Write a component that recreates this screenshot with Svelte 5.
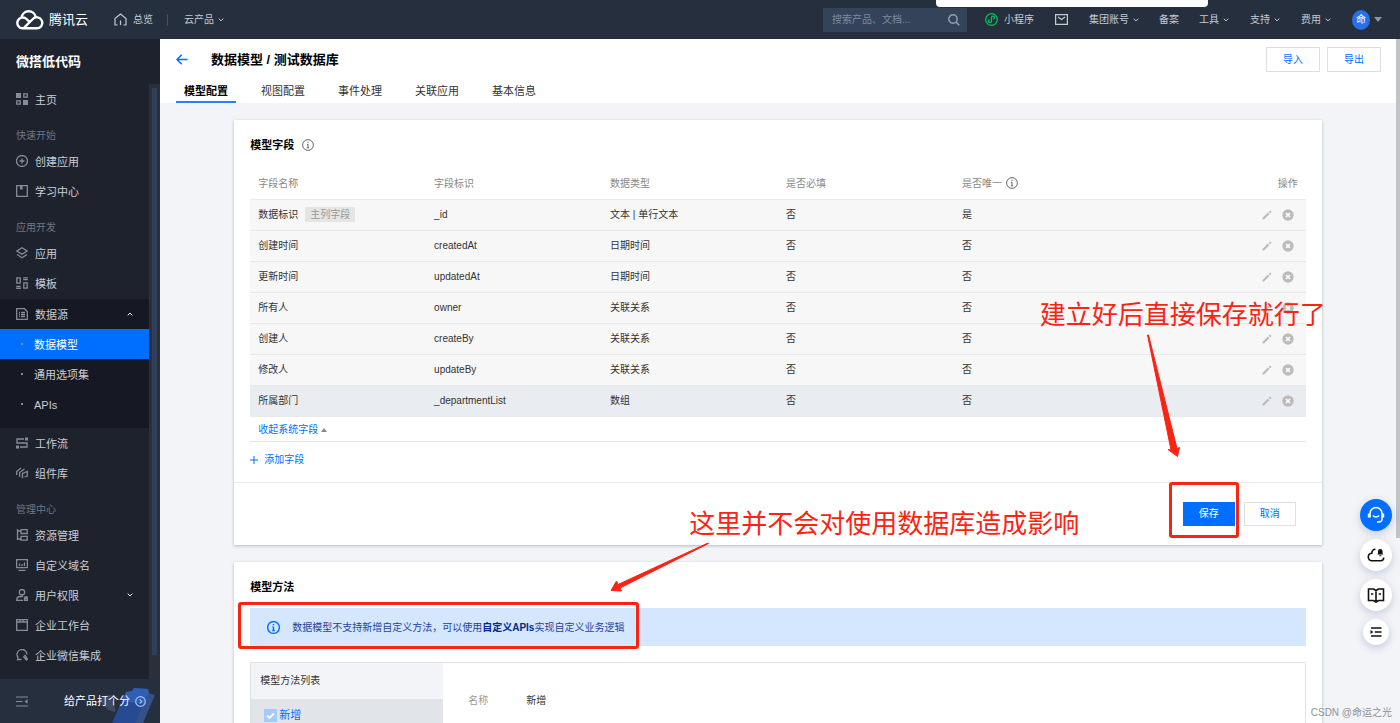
<script>
  const icons = {
    home: '<path d="M0 0h5v5H0zM7 7h5v5H7z" fill="currentColor" stroke="none"/><path d="M7.800.800h3.400v3.400H7.800zM.8 7.800h3.400v3.400H.8z"/>',
    create: '<circle cx="6" cy="6" r="5.5"/><path d="M6 3.5v5M3.5 6h5"/>',
    learn: '<path d="M.7.7h10.6v10.6H.7z"/><path d="M4 1v4l1.3-1L6.600 5V1z" fill="currentColor" stroke="none"/>',
    app: '<path d="M6 .8l5 3.200-5 3.200L1 4z"/><path d="M1 7.500l5 3.300 5-3.300"/>',
    template: '<path d="M.8.8h3.400v5.400H.8zM7.800 5.800h3.400v5.400H7.800z"/><path d="M.2 9.500h4.600M.2 11.300h4.600M7.200.8h4.600M7.200 2.700h4.600"/>',
    data: '<path d="M.7.7h7.800l2.800 2.800v7.800H.7z"/><path d="M3 4.500h1M5 4.500h4M3 6.500h1M5 6.500h4M3 8.500h1M5 8.500h4"/>',
    flow: '<path d="M8 2H1v4h10v4H4"/><path d="M9 .5h3v3H9zM0 8.500h3v3H0z" fill="currentColor" stroke="none"/>',
    parts: '<path d="M.7 8V4.500L5 1M3.700 10V5.500L8.500 2M6.500 11.300V6.500l4.800-2v4.600L8.500 10"/>',
    resource: '<path d="M1.500 0v11M1.500 2H5M1.500 10H5M5 .7h6.200v3.800H5zM5 7.300h6.200v3.900H5z"/>',
    domain: '<path d="M.6.7h10.800v8H.6zM2.500 11.400h7"/><path d="M3.500 7V4.500M6 7V5M8.500 7V3.500"/>',
    user: '<circle cx="6" cy="3.300" r="2.700"/><path d="M7 7.500H4.500C2 7.500.7 9 .7 11.300H7M8.500 9.500h3v2h-3zM9 9.500V8h2v1.500"/>',
    desk: '<path d="M.7.7h10.600v10.600H.7zM1 3h10M4 1v2M7 1v2"/>',
    wechat: '<path d="M5.500 10.500H1.500l.5-2a5 5 0 1 1 9-3"/><path d="M9 6.500l1.300 1.400L9 9.300 7.700 7.900zM10.500 9l1 1-1 1-1-1z"/>'
  };

  const top = [{ icon: 'home', label: '主页' }];
  const quick = [
    { icon: 'create', label: '创建应用' },
    { icon: 'learn', label: '学习中心' }
  ];
  const dev = [
    { icon: 'app', label: '应用' },
    { icon: 'template', label: '模板' }
  ];
  const sub = ['数据模型', '通用选项集', 'APIs'];
  const tools = [
    { icon: 'flow', label: '工作流' },
    { icon: 'parts', label: '组件库' }
  ];
  const manage = [
    { icon: 'resource', label: '资源管理' },
    { icon: 'domain', label: '自定义域名' },
    { icon: 'user', label: '用户权限', more: true },
    { icon: 'desk', label: '企业工作台' },
    { icon: 'wechat', label: '企业微信集成' }
  ];
  const tabs = ['模型配置', '视图配置', '事件处理', '关联应用', '基本信息'];
  const rows = [
    { name: '数据标识', tag: '主列字段', id: '_id', type: '文本 | 单行文本', required: '否', unique: '是' },
    { name: '创建时间', id: 'createdAt', type: '日期时间', required: '否', unique: '否' },
    { name: '更新时间', id: 'updatedAt', type: '日期时间', required: '否', unique: '否' },
    { name: '所有人', id: 'owner', type: '关联关系', required: '否', unique: '否' },
    { name: '创建人', id: 'createBy', type: '关联关系', required: '否', unique: '否' },
    { name: '修改人', id: 'updateBy', type: '关联关系', required: '否', unique: '否' },
    { name: '所属部门', id: '_departmentList', type: '数组', required: '否', unique: '否', hover: true }
  ];
</script>

{#snippet caret(up)}
  <svg class="caret" class:up width="6" height="4" viewBox="0 0 6 4"><path d="M.7.6L3 2.900 5.300.6" /></svg>
{/snippet}

{#snippet info(size)}
  <svg class="info" width={size} height={size} viewBox="0 0 12 12">
    <circle cx="6" cy="6" r="5.400" /><path d="M6 5.200v3.600M4.900 5.400H6M4.800 8.800h2.400M6 2.700v1.300" />
  </svg>
{/snippet}

{#snippet menu(items)}
  {#each items as item}
    <a class="item" href="#top">
      <svg class="icon" width="12" height="12" viewBox="0 0 12 12">{@html icons[item.icon]}</svg>
      <span class="label">{item.label}</span>
      {#if item.more}<span class="end">{@render caret(false)}</span>{/if}
    </a>
  {/each}
{/snippet}

<div class="page">
  <header class="topbar">
    <a class="brand" href="#top">
      <svg width="28" height="20" viewBox="0 0 28 20">
        <path d="M6.500 18.300h14.300a5.500 5.500 0 1 0-4-9.300L8.200 17.600M14 12.500L10.500 9a5.400 5.400 0 1 0-4 9.300M5.600 7.400a7.200 7.200 0 0 1 14.200-.2" />
      </svg>
      <span>腾讯云</span>
    </a>
    <a class="overview" href="#top">
      <svg width="13" height="13" viewBox="0 0 13 13"><path d="M3.500 12H1V5.500L6.500 1 12 5.500V12H9.500M6.500 7.500V12" /></svg>
      总览
    </a>
    <span class="divider"></span>
    <a class="link" href="#top">云产品 {@render caret(false)}</a>
    <div class="right">
      <div class="group">
        <div class="group near">
          <label class="search">
            <input type="text" placeholder="搜索产品、文档..." aria-label="搜索" />
            <svg width="12" height="12" viewBox="0 0 12 12"><circle cx="5" cy="5" r="4.200" /><path d="M8 8l3.300 3.300" /></svg>
          </label>
          <a class="link mini" href="#top">
            <svg width="13" height="13" viewBox="0 0 13 13">
              <circle cx="6.500" cy="6.500" r="5.800" />
              <path d="M6.500 4.800v3.400a1.500 1.500 0 1 1-1.900-1.500M6.500 8.200V4.600a1.500 1.500 0 1 1 1.900 1.500" />
            </svg>
            小程序
          </a>
        </div>
        <a class="mail" href="#top" aria-label="消息">
          <svg width="13" height="11" viewBox="0 0 13 11"><path d="M.6.6h11.800v9.800H.6zM3 3l3.500 2.600L10 3" /></svg>
        </a>
        <a class="link" href="#top">集团账号 {@render caret(false)}</a>
      </div>
      <a class="link" href="#top">备案</a>
      <div class="group">
        <a class="link" href="#top">工具 {@render caret(false)}</a>
        <a class="link" href="#top">支持 {@render caret(false)}</a>
        <a class="link" href="#top">费用 {@render caret(false)}</a>
        <a class="account" href="#top"><span class="avatar">命</span><i class="tri"></i></a>
      </div>
    </div>
    <div class="popover"></div>
  </header>

  <div class="body">
    <aside class="side">
      <h1>微搭低代码</h1>
      <div class="scroller">
        <nav>
          {@render menu(top)}
          <p>快速开始</p>
          {@render menu(quick)}
          <p>应用开发</p>
          {@render menu(dev)}
          <div class="sub">
            <a class="item" href="#top">
              <svg class="icon" width="12" height="12" viewBox="0 0 12 12">{@html icons.data}</svg>
              <span class="label">数据源</span>
              <span class="end">{@render caret(true)}</span>
            </a>
            {#each sub as label, i}
              <a class="item child" class:active={i === 0} href="#top"><i></i><span class="label">{label}</span></a>
            {/each}
          </div>
          {@render menu(tools)}
          <p>管理中心</p>
          {@render menu(manage)}
        </nav>
        <div class="track"><i></i></div>
      </div>
      <div class="rate">
        <svg class="art" width="60" height="38" viewBox="0 0 60 38">
          <path d="M2 15c6-6 14-6 18-3l-6 2c3 4 5 8 4 13-10-2-12-8-16-12z" fill="#3d4a60" />
          <path d="M15 38L29 7l6-1 2-3 14 1 1 4 5 2-13 28z" fill="#264b92" />
          <path d="M29 7l6-1 2-3 14 1 1 4-4 11-23-3z" fill="#2f5fb3" />
          <path d="M51 9l7 1-12 28h-8z" fill="#35518a" />
        </svg>
        <button class="fold" aria-label="收起菜单">
          <svg width="12" height="11" viewBox="0 0 12 11"><path d="M0 1h12M0 5.500h6.500M0 10h12" /><path d="M11.500 3.200v4.600L8.500 5.500z" fill="currentColor" stroke="none" /></svg>
        </button>
        <a href="#top">
          给产品打个分
          <svg width="11" height="11" viewBox="0 0 11 11"><circle cx="5.500" cy="5.500" r="4.800" /><path d="M4.600 3.300l2.200 2.200-2.200 2.200" /></svg>
        </a>
      </div>
    </aside>

    <main>
      <div class="head">
        <div class="title">
          <button class="back" aria-label="返回">
            <svg width="12" height="11" viewBox="0 0 12 11"><path d="M11.500 5.500H1M5.700.7L1 5.500l4.700 4.800" /></svg>
          </button>
          <h2>数据模型 / 测试数据库</h2>
          <button class="btn">导入</button>
          <button class="btn">导出</button>
        </div>
        <div class="tabs" role="tablist">
          {#each tabs as tab, i}
            <button role="tab" aria-selected={i === 0} class:on={i === 0}>{tab}</button>
          {/each}
        </div>
      </div>

      <div class="content">
        <section class="card">
          <div class="inner">
            <h3>模型字段 {@render info(12)}</h3>
            <table>
              <thead>
                <tr>
                  <th>字段名称</th>
                  <th>字段标识</th>
                  <th>数据类型</th>
                  <th>是否必填</th>
                  <th>是否唯一 {@render info(12)}</th>
                  <th class="ops">操作</th>
                </tr>
              </thead>
              <tbody>
                {#each rows as row}
                  <tr class:hover={row.hover}>
                    <td>{row.name}{#if row.tag}<span class="tag">{row.tag}</span>{/if}</td>
                    <td>{row.id}</td>
                    <td>{row.type}</td>
                    <td>{row.required}</td>
                    <td>{row.unique}</td>
                    <td class="ops">
                      <div class="acts">
                        <button aria-label="编辑">
                          <svg width="10" height="10" viewBox="0 0 10 10"><path d="M.5 9.500V7.900l5.400-5.400 1.600 1.600-5.400 5.400zM6.700 1.700L8 .4l1.600 1.600-1.300 1.300z" fill="#bbb" /></svg>
                        </button>
                        <button aria-label="删除">
                          <svg width="12" height="12" viewBox="0 0 12 12"><circle cx="6" cy="6" r="5.700" fill="#bbb" /><path d="M4 4l4 4M8 4L4 8" stroke="#fff" stroke-width="1.600" /></svg>
                        </button>
                      </div>
                    </td>
                  </tr>
                {/each}
              </tbody>
            </table>
            <div class="collapse"><button class="text">收起系统字段 <i></i></button></div>
            <div class="add">
              <button class="text">
                <svg width="8" height="8" viewBox="0 0 8 8"><path d="M4 0v8M0 4h8" /></svg>
                添加字段
              </button>
            </div>
          </div>
          <div class="foot">
            <button class="btn primary">保存</button>
            <button class="btn">取消</button>
          </div>
        </section>

        <section class="card">
          <div class="inner">
            <h3>模型方法</h3>
            <div class="alert">
              {@render info(13)}
              <span class="label">数据模型不支持新增自定义方法，可以使用<b>自定义APIs</b>实现自定义业务逻辑</span>
            </div>
            <div class="methods">
              <div class="list">
                <div class="list-head">模型方法列表</div>
                <label class="check"><input type="checkbox" checked />新增</label>
              </div>
              <dl>
                <dt>名称</dt>
                <dd>新增</dd>
              </dl>
            </div>
          </div>
        </section>

        <div class="notes">
          <span class="note save">建立好后直接保存就行了</span>
          <span class="note impact">这里并不会对使用数据库造成影响</span>
          <span class="frame around-save"></span>
          <span class="frame around-alert"></span>
          <svg class="arrow one" width="36" height="124" viewBox="0 0 36 124"><path d="M.5 1L24 116l-3-.5 9.500 7 2-9-2.500 1L1.500 1z" /></svg>
          <svg class="arrow two" width="100" height="52" viewBox="0 0 100 52"><path d="M97 1L7 42.500 5.500 39 0 48.500l10.500.5-1.500-3L97.500 1.500z" /></svg>
        </div>
      </div>
      <div class="bar"></div>
    </main>
  </div>

  <div class="float">
    <button class="blue" aria-label="客服">
      <svg width="18" height="18" viewBox="0 0 18 18"><path d="M3 11.500V7.500a6 6 0 0 1 12 0v5.500c0 2-1 3-3.500 3H10M6 9.500c1.500 2 4.500 2 6 0" /><path d="M1.800 7.500v4M16.200 7.500v4" stroke-width="2" /></svg>
    </button>
    <button aria-label="云通知">
      <svg width="18" height="16" viewBox="0 0 18 16"><path d="M8.500 2.300C6 2.300 4.700 4.200 4.800 6.300 2.500 6.500 1.300 8 1.300 10s1.500 3.800 3.700 3.800h8.500c2 0 3.200-1.300 3.200-3.300" /><path d="M10.200 7.500l.8-1V4.200a2.300 2.300 0 0 1 4.600 0v2.300l.8 1zM12.300 8.200h2v1h-2z" fill="#111" stroke="none" /></svg>
    </button>
    <button aria-label="文档">
      <svg width="18" height="16" viewBox="0 0 18 16"><path d="M1.500 2h5L9 3.500 11.500 2h5v11.500h-5L9 15l-2.500-1.500h-5zM9 3.500V14M4 7h2.300M11.700 7H14" /></svg>
    </button>
    <button class="small" aria-label="更多">
      <svg width="12" height="10" viewBox="0 0 12 10"><path d="M1 1h10.500M4.800 5h6.700M1 9h10.500" /><path d="M.5 3l2.800 2L.5 7z" fill="#111" stroke="none" /></svg>
    </button>
  </div>
  <div class="mark">CSDN @命运之光</div>
</div>

<style>
  :global(body) { margin: 0; }
  .page {
    position: relative;
    display: flex;
    flex-direction: column;
    height: 100vh;
    overflow: hidden;
    background: #f2f4f8;
    color: #333;
    font: 10px/20px "Liberation Sans", "Noto Sans CJK SC", sans-serif;
  }
  .page :is(a) { color: inherit; text-decoration: none; }
  button {
    padding: 0;
    border: 0;
    background: none;
    color: inherit;
    font: inherit;
    cursor: pointer;
  }
  svg { display: block; flex: none; fill: none; stroke: currentColor; }
  h1, h2, h3, p, dl, dd { margin: 0; }

  .caret { display: inline-block; }
  .caret.up { transform: rotate(180deg); }
  .label { padding-top: 2px; }

  .topbar {
    position: relative;
    flex: none;
    display: flex;
    align-items: center;
    height: 39px;
    padding: 0 18px 0 16px;
    background: #262f3e;
    color: #c4c9d2;
  }
  .brand { display: flex; align-items: center; gap: 5px; margin-right: 26px; font-size: 13px; }
  .topbar .brand { color: #fff; }
  .brand svg { stroke-width: 2.400; }
  .overview { display: flex; align-items: center; gap: 6px; }
  .overview svg { stroke-width: 1.200; }
  .divider { width: 1px; height: 12px; margin: 0 16px 0 14px; background: #465164; }
  .link { display: flex; align-items: center; gap: 4px; white-space: nowrap; }
  .right { display: flex; align-items: center; gap: 20px; margin-left: auto; }
  .group { display: flex; align-items: center; gap: 21px; }
  .group.near { gap: 18px; }
  .search {
    display: flex;
    align-items: center;
    width: 144px;
    height: 24px;
    padding: 0 7px 0 9px;
    box-sizing: border-box;
    background: #34435a;
  }
  .search input {
    flex: 1;
    min-width: 0;
    padding: 0;
    border: 0;
    outline: 0;
    background: none;
    color: #c4c9d2;
    font: inherit;
  }
  .search input::placeholder { color: #7f8a9b; }
  .search svg { stroke-width: 1.400; color: #98a1b0; }
  .mini { gap: 6px; }
  .mini svg { color: #0abf5b; stroke-width: 1.300; }
  .mail svg { stroke-width: 1.200; }
  .account { display: flex; align-items: center; gap: 4px; }
  .avatar {
    width: 18px;
    height: 20px;
    border-radius: 50%;
    background: #2670e8;
    color: #fff;
    text-align: center;
  }
  .tri { border: 4px solid transparent; border-top: 5px solid #8d95a3; border-bottom: 0; }
  .popover {
    position: absolute;
    top: 0;
    right: 192px;
    width: 272px;
    height: 7px;
    border-radius: 0 0 4px 4px;
    background: #fff;
  }

  .body { flex: 1; display: flex; min-height: 0; }
  .side {
    flex: none;
    display: flex;
    flex-direction: column;
    width: 160px;
    background: #1e222d;
    color: #c9cdd4;
    font-size: 11px;
  }
  h1 { padding: 13px 16px 12px; color: #fff; font-size: 13px; line-height: 20px; font-weight: 700; }
  .scroller { flex: 1; display: flex; min-height: 0; }
  nav { flex: 1; min-width: 0; overflow: hidden; }
  nav p { padding: 12px 16px 0; color: #6f7683; font-size: 10px; }
  .item { display: flex; align-items: center; height: 30px; padding: 0 16px; gap: 7px; }
  .icon { color: #858c98; stroke-width: 1.300; }
  .end { margin-left: auto; display: flex; color: #fff; }
  .sub { margin-top: 1px; padding-bottom: 9px; background: #161923; }
  .child { padding-left: 21px; gap: 11px; }
  .child i { width: 2px; height: 2px; background: #858c98; }
  .sub .active { background: #006eff; color: #fff; }
  .track { width: 11px; padding: 4px 3px 24px; box-sizing: border-box; background: #2a2f39; display: flex; }
  .track i { flex: 1; background: #2f3f58; }
  .rate {
    position: relative;
    flex: none;
    display: flex;
    align-items: center;
    justify-content: space-between;
    height: 44px;
    padding: 0 14px 0 16px;
    background: #262f3e;
  }
  .rate a { position: relative; display: flex; align-items: center; gap: 5px; color: #fff; }
  .rate a svg { color: #9cc3ff; stroke-width: 1.200; }
  .fold { color: #858c98; }
  .art { position: absolute; right: 3px; bottom: 0; stroke: none; }

  main { position: relative; flex: 1; min-width: 0; overflow: hidden; padding-right: 4px; }
  .head { padding: 8px 15px 0 16px; background: #fff; }
  .title { display: flex; align-items: center; height: 25px; gap: 7px; }
  .back { color: #006eff; }
  .back svg { stroke-width: 1.500; }
  h2 { flex: 1; margin-left: 16px; color: #000; font-size: 13px; font-weight: 700; }
  .btn {
    width: 54px;
    height: 25px;
    border: 1px solid #dcdfe5;
    background: #fff;
    color: #006eff;
    line-height: 20px;
  }
  .tabs { display: flex; gap: 17px; padding-top: 7px; }
  .tabs button {
    height: 24px;
    padding: 2px 8px 0;
    border-bottom: 2px solid transparent;
    color: #333;
    font-size: 11px;
  }
  .tabs .on { border-color: #2b7ff5; color: #000; font-weight: 700; }

  .content { position: relative; width: 88%; margin: 0 auto; padding-top: 17px; }
  .card { margin-bottom: 17px; background: #fff; box-shadow: 0 1px 3px rgba(54, 58, 80, 0.32); }
  .inner { padding: 15px 16px 0; }
  h3 { display: flex; align-items: center; gap: 8px; color: #000; font-size: 11px; font-weight: 700; }
  .info { stroke-width: 1; color: #666; }
  table { width: 100%; margin-top: 13px; border-spacing: 0; table-layout: fixed; }
  th, td {
    height: 31px;
    padding: 0 8px;
    box-sizing: border-box;
    border-bottom: 1px solid #e7e9ec;
    text-align: left;
    font-weight: 400;
    white-space: nowrap;
  }
  th { height: 32px; color: #888; }
  th .info { display: inline-block; margin-left: 1px; vertical-align: -2px; }
  td { background: #f7f7f7; }
  .hover td { background: #e9ecf0; }
  .ops { text-align: right; }
  .acts { display: flex; align-items: center; justify-content: flex-end; gap: 10px; padding-right: 4px; }
  .acts svg { stroke: none; }
  .tag {
    display: inline-block;
    margin-left: 7px;
    padding: 0 5px;
    background: #e5e5e5;
    color: #999;
    line-height: 15px;
  }
  .text { display: flex; align-items: center; gap: 3px; color: #006eff; }
  .collapse { padding: 3px 8px 1px; border-bottom: 1px solid #e2e5ea; }
  .collapse i { border: 3px solid transparent; border-bottom: 4px solid #888; border-top: 0; }
  .add { padding: 8px 0 12px; }
  .add .text { gap: 6px; }
  .foot {
    display: flex;
    justify-content: flex-end;
    gap: 9px;
    padding: 19px 26px;
    border-top: 1px solid #ebedf0;
  }
  .foot .btn { width: 52px; height: 24px; }
  .foot .primary { border-color: #006eff; background: #006eff; color: #fff; }

  .alert {
    display: flex;
    align-items: center;
    gap: 12px;
    height: 38px;
    margin: 11px 0 16px;
    padding: 0 17px;
    background: #d5e7ff;
    color: #1f429c;
  }
  .alert .info { color: #006eff; stroke-width: 1.300; }
  .alert b { color: #002b8a; }
  .methods { display: flex; min-height: 180px; border: 1px solid #dfe2e7; }
  .list { width: 192px; background: #e1e4e8; }
  .list-head { padding: 8px 9px; background: #f2f4f8; }
  .check { display: flex; align-items: center; gap: 2px; padding: 6px 13px; color: #006eff; font-size: 11px; }
  .check input {
    appearance: none;
    width: 13px;
    height: 13px;
    margin: 0;
    background: #a3cbff url("data:image/svg+xml,%3Csvg xmlns='http://www.w3.org/2000/svg' viewBox='0 0 13 13'%3E%3Cpath d='M3 6.500l2.500 2.500L10 4.500' fill='none' stroke='white' stroke-width='1.800'/%3E%3C/svg%3E");
  }
  dl { display: flex; gap: 38px; padding: 28px 25px; }
  dt { color: #999; }

  .notes { position: absolute; inset: 17px 0 0; pointer-events: none; color: #fb2313; }
  .note { position: absolute; font-size: 26px; line-height: 36px; white-space: nowrap; }
  .note.save { top: 177px; right: -4px; }
  .note.impact { top: 386px; left: 455px; }
  .frame { position: absolute; box-sizing: border-box; border: 3px solid #fb2313; border-radius: 3px; }
  .around-save { top: 362px; right: 83px; width: 70px; height: 56px; }
  .around-alert { top: 482px; left: 4px; width: 401px; height: 47px; }
  .arrow { position: absolute; fill: #fb2313; stroke: #fb2313; }
  .one { top: 214px; right: 139px; }
  .two { top: 422px; left: 377px; }
  .bar { position: absolute; top: 0; right: 0; width: 4px; height: 73%; background: #c1c3c7; }

  .float {
    position: absolute;
    right: 8px;
    bottom: 78px;
    display: flex;
    flex-direction: column;
    align-items: center;
    gap: 8px;
  }
  .float button {
    display: grid;
    place-items: center;
    width: 32px;
    height: 32px;
    border-radius: 50%;
    background: #fff;
    color: #111;
    box-shadow: 0 3px 8px rgba(40, 60, 110, 0.22);
  }
  .float svg { stroke-width: 1.600; }
  .float .blue { background: #006eff; color: #fff; }
  .float .small { width: 26px; height: 26px; }
  .mark { position: absolute; right: 8px; bottom: 0; color: #8f9299; }
</style>
